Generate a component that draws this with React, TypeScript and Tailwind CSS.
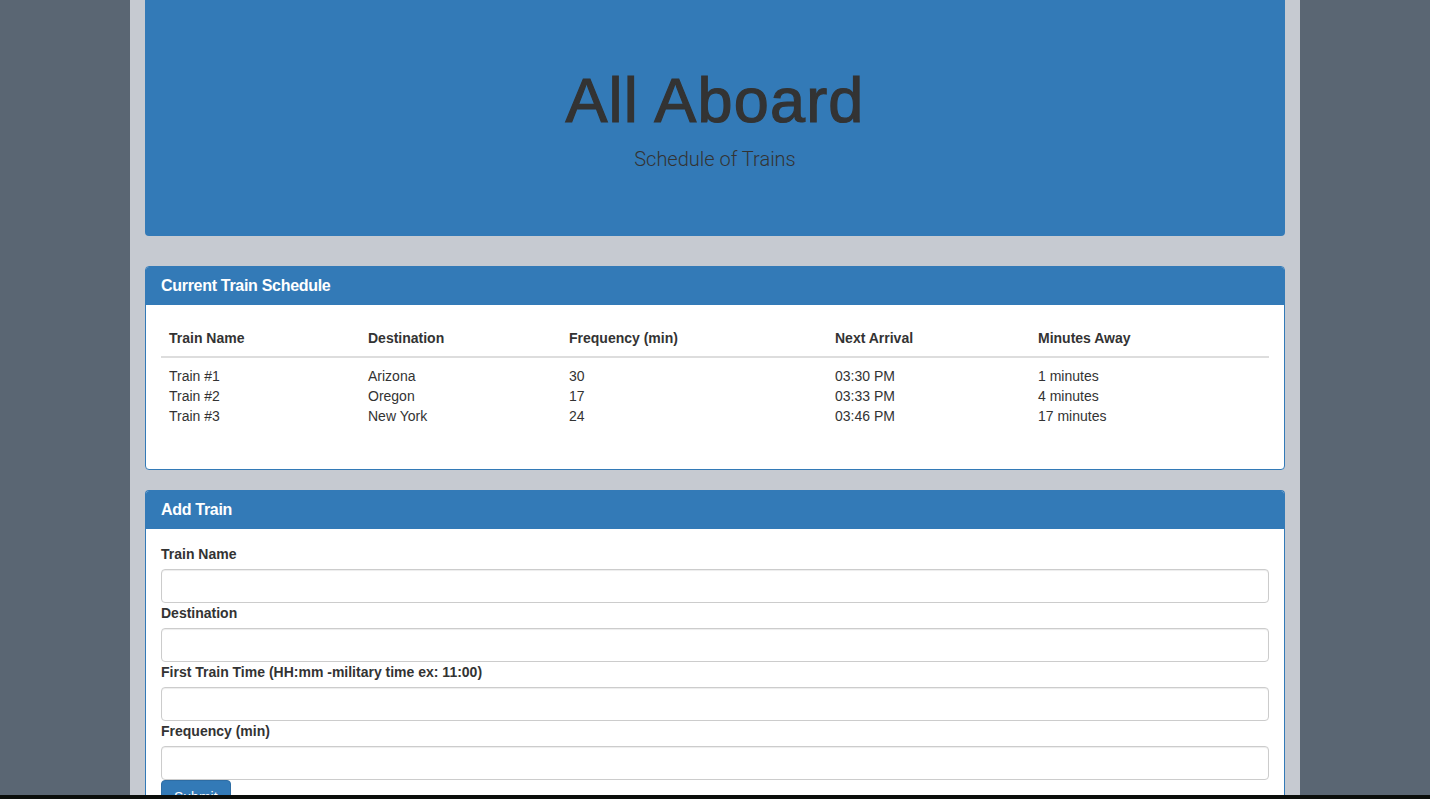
import React from "react";

const rows = [
  ["Train #1", "Arizona", "30", "03:30 PM", "1 minutes"],
  ["Train #2", "Oregon", "17", "03:33 PM", "4 minutes"],
  ["Train #3", "New York", "24", "03:46 PM", "17 minutes"],
];

const headers = ["Train Name", "Destination", "Frequency (min)", "Next Arrival", "Minutes Away"];

const fields = [
  "Train Name",
  "Destination",
  "First Train Time (HH:mm -military time ex: 11:00)",
  "Frequency (min)",
];

export default function App() {
  return (
    <div
      className="flex h-[799px] w-[1430px] flex-col overflow-hidden bg-[#5a6673] text-[14px] leading-[20px] text-[#333]"
      style={{ fontFamily: '"Liberation Sans", Arial, sans-serif' }}
    >
      <div className="flex h-[795px] justify-center overflow-hidden">
        <div className="flex h-full w-[1170px] flex-col bg-[#c6cad1] px-[15px]">
          {/* Jumbotron */}
          <div className="flex h-[236px] shrink-0 flex-col items-center rounded-b-[4px] bg-[#337ab7] pt-[66px]">
            <h1 className="text-[63px] leading-[69px] font-normal tracking-[1.2px] text-[#333] [-webkit-text-stroke:1.2px_#333]">
              All Aboard
            </h1>
            <p
              className="mt-[10px] text-[20px] leading-[28px] font-light text-[#333]"
              style={{ fontFamily: 'Roboto, "Liberation Sans", sans-serif' }}
            >
              Schedule of Trains
            </p>
          </div>

          {/* Schedule panel */}
          <div className="mt-[30px] shrink-0 overflow-hidden rounded-[4px] border border-[#337ab7] bg-white">
            <div className="h-[38px] bg-[#337ab7] px-[15px] pt-[10px]">
              <h3 className="text-[16px] leading-[18px] font-bold tracking-[-0.3px] text-white">Current Train Schedule</h3>
            </div>
            <div className="px-[15px] pt-[15px] pb-[43px]">
              <div className="grid grid-cols-[199px_201px_266px_203px_239px] border-b-2 border-[#ddd] py-[8px] font-bold">
                {headers.map((h) => (
                  <div key={h} className="pl-[8px]">
                    {h}
                  </div>
                ))}
              </div>
              <div className="pt-[8px]">
                {rows.map((r) => (
                  <div key={r[0]} className="grid grid-cols-[199px_201px_266px_203px_239px]">
                    {r.map((c, i) => (
                      <div key={i} className="pl-[8px]">
                        {c}
                      </div>
                    ))}
                  </div>
                ))}
              </div>
            </div>
          </div>

          {/* Add Train panel */}
          <div className="mt-[20px] flex-1 overflow-hidden rounded-t-[4px] border border-b-0 border-[#337ab7] bg-white">
            <div className="h-[38px] bg-[#337ab7] px-[15px] pt-[10px]">
              <h3 className="text-[16px] leading-[18px] font-bold tracking-[-0.3px] text-white">Add Train</h3>
            </div>
            <div className="px-[15px] pt-[15px]">
              {fields.map((f) => (
                <div key={f}>
                  <label className="mb-[5px] block font-bold">{f}</label>
                  <input
                    type="text"
                    className="block h-[34px] w-full rounded-[4px] border border-[#ccc] bg-white px-[12px] shadow-[inset_0_1px_1px_rgba(0,0,0,0.075)] outline-none"
                  />
                </div>
              ))}
              <button className="h-[34px] rounded-[4px] border border-[#2e6da4] bg-[#337ab7] px-[12px] text-[14px] text-white">
                Submit
              </button>
            </div>
          </div>
        </div>
      </div>
      <div className="h-[4px] shrink-0 bg-[#0b0e0b]" />
    </div>
  );
}
